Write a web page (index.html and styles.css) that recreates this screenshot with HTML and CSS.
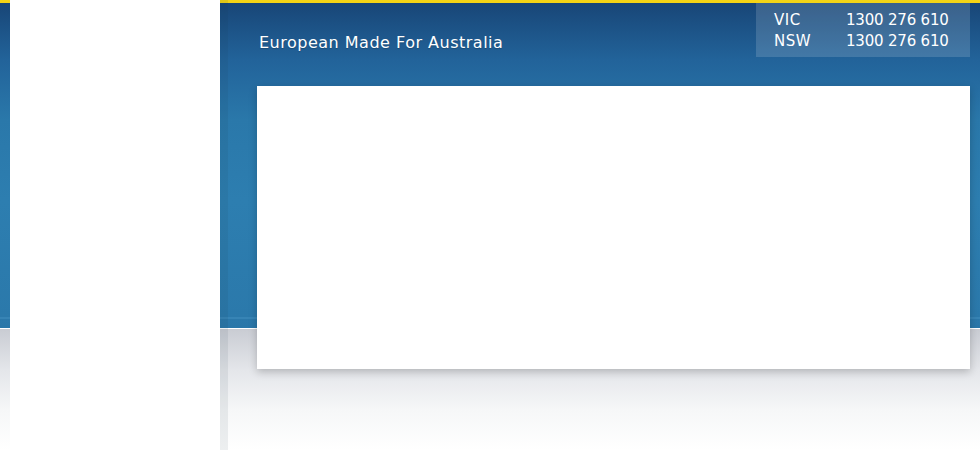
FILE: index.html
```html
<!DOCTYPE html>
<html lang="en">
<head>
  <meta charset="UTF-8">
  <meta name="viewport" content="width=device-width, initial-scale=1.0">
  <title>European Made For Australia</title>
  <link rel="stylesheet" href="styles.css">
</head>
<body>
  <div class="wrap">
    <div class="sidebar">
      <!-- logo / nav column -->
    </div>
    <div class="main">
      <header>
        <div class="tagline">European Made For Australia</div>
        <div class="phones">
          <div class="row"><span class="state">VIC</span><span class="num">1300 276 610</span></div>
          <div class="row"><span class="state">NSW</span><span class="num">1300 276 610</span></div>
        </div>
      </header>
      <div class="panel">
        <!-- banner -->
      </div>
    </div>
  </div>
</body>
</html>
```

FILE: styles.css
```css
html, body { height:100%; }
body {
  margin:0; padding:0;
  font-family: "DejaVu Sans", Verdana, sans-serif;
  color:#fff;
  background:linear-gradient(to bottom,
    #f4d415 0, #f4d415 3px,
    #184677 3px, #22639a 60px, #2a78aa 120px, #2d7eb0 200px, #2b79ab 317px,
    #3784b5 317px, #3784b5 319px,
    #2b78aa 319px, #2a77a9 328px,
    #fff 328px, #fff 329px,
    #c9ccd3 329px, #e4e6ea 370px, #f6f7f8 410px, #fff 450px);
  background-repeat:no-repeat;
}
.wrap { display:flex; min-height:450px; }
.sidebar {
  width:210px; margin-left:10px;
  background:#fff;
  box-shadow:8px 0 0 rgba(30,50,70,0.08);
}
.main { flex:1; padding:3px 10px 0 37px; }
header {
  display:flex; justify-content:space-between; align-items:flex-start;
  height:54px;
}
.tagline {
  margin:30px 0 0 2px;
  font-size:16px; line-height:20px;
  letter-spacing:0.5px;
  text-shadow:0 1px 1px rgba(0,0,0,0.2);
}
.phones {
  width:196px; height:47px;
  padding:7px 0 0 18px;
  background:rgba(255,255,255,0.15);
  font-size:15px; line-height:21px;
}
.phones .row { display:flex; }
.phones .state { width:72px; letter-spacing:0.5px; }
.phones .num { letter-spacing:-0.2px; }
.panel {
  margin-top:29px;
  height:283px;
  background:#fff;
  box-shadow:0 3px 8px rgba(0,0,0,0.22);
}
```
